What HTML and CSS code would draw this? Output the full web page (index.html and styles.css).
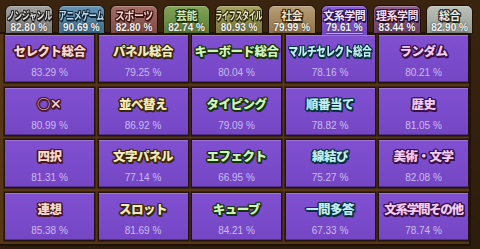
FILE: index.html
```html
<!DOCTYPE html>
<html lang="ja">

<head>
    <meta charset="UTF-8">
    <meta name="viewport" content="width=device-width, initial-scale=1.0">
    <title>文系学問 正解率</title>
    <link rel="stylesheet" href="styles.css">
</head>

<body>
    <div class="frame">
        <nav class="tabs">
            <div class="tab tab-nongenre"><span class="tab-name squeeze-2">ノンジャンル</span><span class="tab-rate">82.80 %</span></div>
            <div class="tab tab-anime"><span class="tab-name squeeze-2">アニメゲーム</span><span class="tab-rate">90.69 %</span></div>
            <div class="tab tab-sports"><span class="tab-name squeeze-1">スポーツ</span><span class="tab-rate">82.80 %</span></div>
            <div class="tab tab-geinou"><span class="tab-name">芸能</span><span class="tab-rate">82.74 %</span></div>
            <div class="tab tab-life"><span class="tab-name squeeze-3">ライフスタイル</span><span class="tab-rate">80.93 %</span></div>
            <div class="tab tab-society"><span class="tab-name">社会</span><span class="tab-rate">79.99 %</span></div>
            <div class="tab tab-bunkei active"><span class="tab-name">文系学問</span><span class="tab-rate">79.61 %</span></div>
            <div class="tab tab-rikei"><span class="tab-name">理系学問</span><span class="tab-rate">83.44 %</span></div>
            <div class="tab tab-total"><span class="tab-name">総合</span><span class="tab-rate">82.90 %</span></div>
        </nav>

        <main class="board">
            <div class="card t-select"><span class="card-title">セレクト総合</span><span class="card-rate">83.29 %</span></div>
            <div class="card t-panel"><span class="card-title">パネル総合</span><span class="card-rate">79.25 %</span></div>
            <div class="card t-keyboard"><span class="card-title">キーボード総合</span><span class="card-rate">80.04 %</span></div>
            <div class="card t-multi"><span class="card-title narrow">マルチセレクト総合</span><span class="card-rate">78.16 %</span></div>
            <div class="card t-random"><span class="card-title">ランダム</span><span class="card-rate">80.21 %</span></div>

            <div class="card t-select"><span class="card-title">◯×</span><span class="card-rate">80.99 %</span></div>
            <div class="card t-panel"><span class="card-title">並べ替え</span><span class="card-rate">86.92 %</span></div>
            <div class="card t-keyboard"><span class="card-title">タイピング</span><span class="card-rate">79.09 %</span></div>
            <div class="card t-multi"><span class="card-title">順番当て</span><span class="card-rate">78.82 %</span></div>
            <div class="card t-random"><span class="card-title">歴史</span><span class="card-rate">81.05 %</span></div>

            <div class="card t-select"><span class="card-title">四択</span><span class="card-rate">81.31 %</span></div>
            <div class="card t-panel"><span class="card-title">文字パネル</span><span class="card-rate">77.14 %</span></div>
            <div class="card t-keyboard"><span class="card-title">エフェクト</span><span class="card-rate">66.95 %</span></div>
            <div class="card t-multi"><span class="card-title">線結び</span><span class="card-rate">75.27 %</span></div>
            <div class="card t-random"><span class="card-title">美術・文学</span><span class="card-rate">82.08 %</span></div>

            <div class="card t-select"><span class="card-title">連想</span><span class="card-rate">85.38 %</span></div>
            <div class="card t-panel"><span class="card-title">スロット</span><span class="card-rate">81.69 %</span></div>
            <div class="card t-keyboard"><span class="card-title">キューブ</span><span class="card-rate">84.21 %</span></div>
            <div class="card t-multi"><span class="card-title">一問多答</span><span class="card-rate">67.33 %</span></div>
            <div class="card t-random"><span class="card-title tight">文系学問その他</span><span class="card-rate">78.74 %</span></div>
        </main>
    </div>
</body>

</html>
```

FILE: styles.css
```css
* {
    margin: 0;
    padding: 0;
    box-sizing: border-box;
}

body {
    width: 480px;
    height: 249px;
    overflow: hidden;
    background-color: #2b1a0b;
    font-family: "Noto Sans CJK JP", "Liberation Sans", sans-serif;
}

.frame {
    width: 480px;
    height: 249px;
    background: linear-gradient(#3a2410, #2e1c0c);
}

/* genre tabs */

.tabs {
    display: flex;
    gap: 5px;
    height: 33px;
    padding: 5px 0 0 5px;
}

.tab {
    width: 47.6px;
    height: 28px;
    display: flex;
    flex-direction: column;
    align-items: center;
    padding-top: 2px;
    border: 1px solid #1e1207;
    border-bottom: none;
    border-radius: 6px 6px 0 0;
    box-shadow: inset 0 1px 0 rgba(255, 255, 255, 0.25);
    overflow: hidden;
}

.tab.active {
    height: 30px;
    position: relative;
    z-index: 2;
}

.tab-name {
    display: inline-block;
    white-space: nowrap;
    font-size: 11px;
    font-weight: 700;
    line-height: 14px;
    letter-spacing: -0.5px;
    color: #e8e8e8;
    --edge: #1c1a18;
    text-shadow: 1px 0 0 var(--edge), -1px 0 0 var(--edge), 0 1px 0 var(--edge), 0 -1px 0 var(--edge),
        1px 1px 0 var(--edge), -1px -1px 0 var(--edge), 1px -1px 0 var(--edge), -1px 1px 0 var(--edge),
        1px 2px 0 var(--edge);
}

.squeeze-1 {
    transform: scaleX(0.9);
}

.squeeze-2 {
    transform: scaleX(0.72);
}

.squeeze-3 {
    transform: scaleX(0.64);
}

.tab-rate {
    font-family: "Liberation Sans", sans-serif;
    font-size: 10px;
    font-weight: 700;
    line-height: 12px;
    color: #f2f2f2;
    text-decoration: underline;
    text-decoration-color: rgba(255, 255, 255, 0.6);
    text-underline-offset: 2px;
    text-shadow: 0 0 2px rgba(0, 0, 0, 0.8);
}

.tab-nongenre {
    background: linear-gradient(#a0a0a0, #7a7a7a);
}

.tab-nongenre .tab-name {
    color: #e2e2e2;
}

.tab-anime {
    background: linear-gradient(#6592b2, #42708e);
}

.tab-anime .tab-name {
    color: #c0dcf0;
    --edge: #102434;
}

.tab-sports {
    background: linear-gradient(#a46c64, #7c4c46);
}

.tab-sports .tab-name {
    color: #f4d2ce;
    --edge: #3a1412;
}

.tab-geinou {
    background: linear-gradient(#82a456, #5c7c38);
}

.tab-geinou .tab-name {
    color: #d2eab2;
    --edge: #1c3010;
}

.tab-life {
    background: linear-gradient(#a4a25c, #7a783c);
}

.tab-life .tab-name {
    color: #eeecc8;
    --edge: #2c2a0e;
}

.tab-society {
    background: linear-gradient(#b89e76, #90744c);
}

.tab-society .tab-name {
    color: #f2e2c8;
    --edge: #34240e;
}

.tab-bunkei {
    background: linear-gradient(#8a5cd8, #7448c4);
}

.tab-bunkei .tab-name {
    color: #f0e4ff;
    --edge: #2a1050;
}

.tab-rikei {
    background: linear-gradient(#90608a, #6c4064);
}

.tab-rikei .tab-name {
    color: #f4dcf0;
    --edge: #2c0e28;
}

.tab-total {
    background: linear-gradient(#bcc2ba, #949c92);
}

.tab-total .tab-name {
    color: #eef2ee;
    --edge: #1e241e;
}

/* form grid */

.board {
    display: grid;
    grid-template-columns: repeat(5, 89px);
    grid-auto-rows: 47px;
    column-gap: 4.5px;
    row-gap: 5.6px;
    width: 471px;
    height: 214px;
    margin-top: -1px;
    padding: 1px 0 0 5px;
    border-top: 2px solid #1e1207;
    border-right: 2px solid #1e1207;
    border-bottom: 2px solid #1e1207;
    background-color: #553616;
}

.card {
    display: flex;
    flex-direction: column;
    align-items: center;
    padding-top: 7px;
    background: linear-gradient(#8050d0, #7446c4);
    box-shadow: 0 0 0 1.5px #22140a, inset 0 1px 0 rgba(255, 255, 255, 0.22), inset 0 -1px 0 rgba(0, 0, 0, 0.3);
}

.card-title {
    display: inline-block;
    white-space: nowrap;
    font-size: 12.5px;
    font-weight: 900;
    line-height: 18px;
    letter-spacing: -0.5px;
    --edge: #3a1420;
    text-shadow: 1px 0 0 var(--edge), -1px 0 0 var(--edge), 0 1px 0 var(--edge), 0 -1px 0 var(--edge),
        1px 1px 0 var(--edge), -1px -1px 0 var(--edge), 1px -1px 0 var(--edge), -1px 1px 0 var(--edge),
        1.5px 1.5px 0 var(--edge), 0 2px 0 var(--edge), 1.5px 0 0 var(--edge), -1.5px 0 0 var(--edge);
}

.card-title.narrow {
    transform: scaleX(0.77);
}

.card-title.tight {
    letter-spacing: -1.3px;
}

.card-rate {
    margin-top: 6px;
    font-family: "Liberation Sans", sans-serif;
    font-size: 10px;
    line-height: 14px;
    color: #cbbcf2;
}

.t-select .card-title {
    color: #f6dad0;
    --edge: #48141e;
}

.t-panel .card-title {
    color: #f4eabe;
    --edge: #382808;
}

.t-keyboard .card-title {
    color: #d4f2bc;
    --edge: #14340c;
}

.t-multi .card-title {
    color: #c2eef0;
    --edge: #08303e;
}

.t-random .card-title {
    color: #f2ccf2;
    --edge: #3a1046;
}
```
